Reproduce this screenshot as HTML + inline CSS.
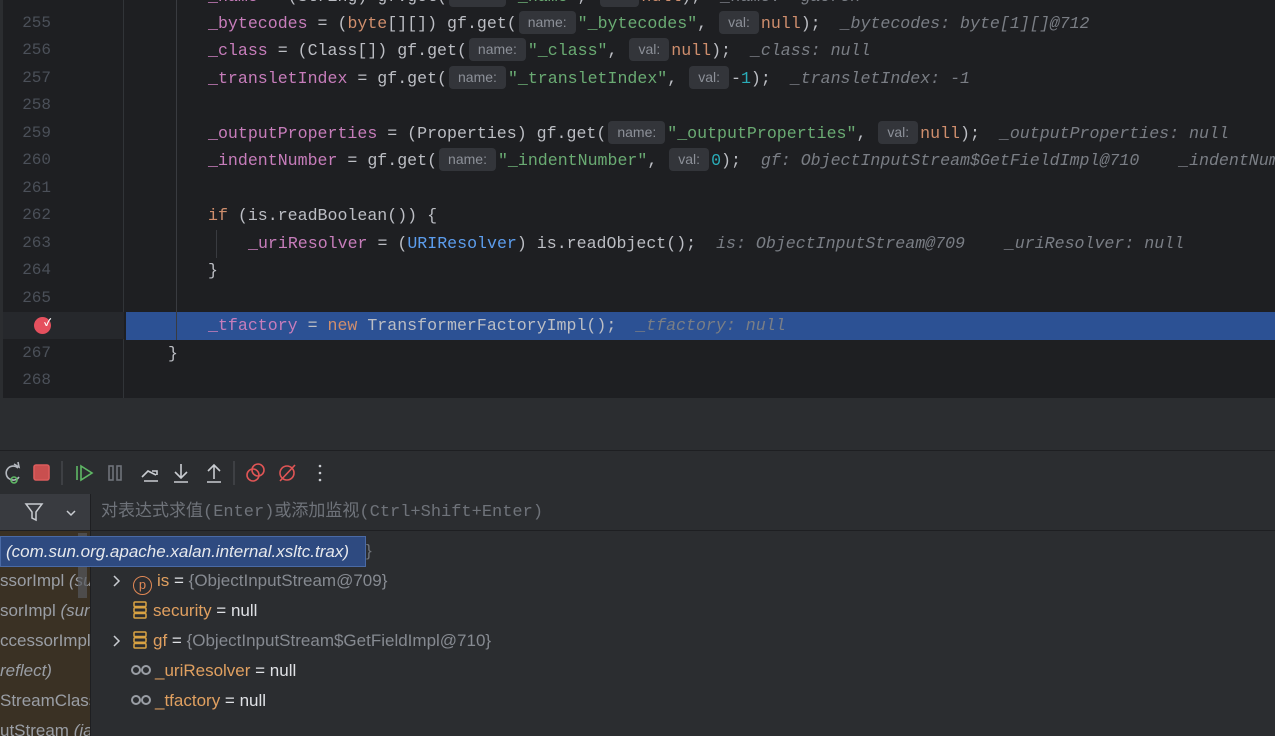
<!DOCTYPE html>
<html><head><meta charset="utf-8"><style>
*{margin:0;padding:0;box-sizing:border-box}
body{width:1275px;height:736px;overflow:hidden;background:#2b2d30;position:relative;font-family:"Liberation Sans","Noto Sans CJK SC",sans-serif}
.ed{position:absolute;left:0;top:0;width:1275px;height:398px;background:#1e1f22;overflow:hidden}
.gut{position:absolute;left:0;top:0;width:124px;height:398px;border-right:1px solid #313438;border-left:3px solid #2b2d30}
.ln{position:absolute;left:0;width:51px;text-align:right;font:16px "Liberation Mono",monospace;color:#4b5059;height:27px;line-height:27px}
.cl{position:absolute;left:208px;white-space:pre;font:16.6px "Liberation Mono",monospace;color:#bcbec4;height:27px;line-height:27px}
.f{color:#c77dbb}.k{color:#cf8e6d}.s{color:#6aab73}.n{color:#2aacb8}.c{color:#5c9ded}
.h{color:#7a7e85;font-style:italic}
.i{display:inline-block;font:14px "Liberation Sans",sans-serif;color:#8c9098;background:#33353a;border-radius:4px;padding:0 9px;height:23px;line-height:23px;margin:0 2px;vertical-align:1px;font-style:normal}
.guide{position:absolute;width:1px;background:#393b40}
.tb{position:absolute;top:450px;left:0;width:1275px;height:44px;background:#2b2d30;border-top:1px solid #1e1f22}
.var{position:absolute;left:91px;top:531px;right:0;bottom:0;background:#2b2d30}
.row{position:absolute;left:0;height:30px;line-height:30px;font-size:17px;color:#dfe1e5;white-space:nowrap}
.o{color:#e0a060}.g{color:#868a91}
.fr{position:absolute;left:0;top:531px;width:90px;bottom:0;background:#3a3124;overflow:hidden}
.fr div{position:absolute;left:0;height:30px;line-height:30px;font-size:17px;color:#9a9ea5;white-space:nowrap}
.st{display:inline-block;width:14px;height:18px;vertical-align:-3px;margin-right:6px}
</style></head><body>
<div class="ed">
<div class="gut"></div>
<div style="position:absolute;left:3px;top:312px;width:121px;height:27px;background:#26282c"></div>
<div style="position:absolute;left:126px;top:312px;width:1149px;height:28px;background:#2c5194"></div>
<div class="guide" style="left:176px;top:0;height:340px"></div>
<div class="guide" style="left:216px;top:230px;height:28px"></div>
<div class="ln" style="top:-17px">254</div>
<div class="ln" style="top:10px">255</div><div class="ln" style="top:37px">256</div><div class="ln" style="top:65px">257</div><div class="ln" style="top:92px">258</div><div class="ln" style="top:120px">259</div><div class="ln" style="top:147px">260</div><div class="ln" style="top:175px">261</div><div class="ln" style="top:202px">262</div><div class="ln" style="top:230px">263</div><div class="ln" style="top:257px">264</div><div class="ln" style="top:285px">265</div><div class="ln" style="top:340px">267</div><div class="ln" style="top:367px">268</div>
<div style="position:absolute;left:34px;top:317px;width:17px;height:17px;border-radius:50%;background:#e5505e"></div>
<div style="position:absolute;left:44px;top:314px;color:#fff;font-size:10px;font-weight:bold">✓</div>
<div class="cl" style="top:-17px"><span class="f">_name</span> = (String) gf.get(<span class="i">name:</span><span class="s">"_name"</span>, <span class="i">val:</span><span class="k">null</span>);  <span class="h">_name: "gaoren"</span></div>
<div class="cl" style="top:10px"><span class="f">_bytecodes</span> = (<span class="k">byte</span>[][]) gf.get(<span class="i">name:</span><span class="s">"_bytecodes"</span>, <span class="i">val:</span><span class="k">null</span>);  <span class="h">_bytecodes: byte[1][]@712</span></div>
<div class="cl" style="top:37px"><span class="f">_class</span> = (Class[]) gf.get(<span class="i">name:</span><span class="s">"_class"</span>, <span class="i">val:</span><span class="k">null</span>);  <span class="h">_class: null</span></div>
<div class="cl" style="top:65px"><span class="f">_transletIndex</span> = gf.get(<span class="i">name:</span><span class="s">"_transletIndex"</span>, <span class="i">val:</span>-<span class="n">1</span>);  <span class="h">_transletIndex: -1</span></div>
<div class="cl" style="top:120px"><span class="f">_outputProperties</span> = (Properties) gf.get(<span class="i">name:</span><span class="s">"_outputProperties"</span>, <span class="i">val:</span><span class="k">null</span>);  <span class="h">_outputProperties: null</span></div>
<div class="cl" style="top:147px"><span class="f">_indentNumber</span> = gf.get(<span class="i">name:</span><span class="s">"_indentNumber"</span>, <span class="i">val:</span><span class="n">0</span>);  <span class="h">gf: ObjectInputStream$GetFieldImpl@710    _indentNumber: 0</span></div>
<div class="cl" style="top:202px"><span class="k">if</span> (is.readBoolean()) {</div>
<div class="cl" style="top:230px;left:248px"><span class="f">_uriResolver</span> = (<span class="c">URIResolver</span>) is.readObject();  <span class="h">is: ObjectInputStream@709    _uriResolver: null</span></div>
<div class="cl" style="top:257px">}</div>
<div class="cl" style="top:312px"><span class="f">_tfactory</span> = <span class="k">new</span> TransformerFactoryImpl();  <span class="h">_tfactory: null</span></div>
<div class="cl" style="top:340px;left:168px">}</div>
</div>
<div style="position:absolute;top:398px;left:0;width:1275px;height:51px;background:#2b2d30"></div>
<div class="tb">
<svg width="340" height="44" style="position:absolute;left:0;top:0" fill="none" stroke-width="1.6">
<path d="M18 17a7 7 0 1 0 1 9" stroke="#b4b8bf"/><path d="M14 13l5 3-1-5" stroke="#b4b8bf"/><circle cx="14" cy="29" r="3" stroke="#5fb865"/>
<rect x="34" y="14" width="15" height="15" rx="2" fill="#c94f4f" stroke="#db5c5c"/>
<line x1="62" y1="10" x2="62" y2="34" stroke="#43454a"/>
<line x1="77" y1="15" x2="77" y2="29" stroke="#5fb865"/><path d="M81 15l11 7-11 7z" stroke="#5fb865"/>
<rect x="109" y="15" width="4" height="14" stroke="#6f737a"/><rect x="117" y="15" width="4" height="14" stroke="#6f737a"/>
<path d="M142 26l6-6 8 4M144 30h14M152 20h5v4" stroke="#c9ccd1"/>
<path d="M181 13v13M175 21l6 6 6-6M174 31h14" stroke="#c9ccd1"/>
<path d="M214 28v-13M208 20l6-6 6 6M207 31h14" stroke="#c9ccd1"/>
<line x1="234" y1="10" x2="234" y2="34" stroke="#43454a"/>
<circle cx="253" cy="24" r="6" stroke="#e05555"/><circle cx="258" cy="19" r="6" stroke="#e05555"/>
<circle cx="287" cy="22" r="7" stroke="#e05555"/><line x1="280" y1="30" x2="295" y2="14" stroke="#e05555"/>
<circle cx="320" cy="15" r="1.3" fill="#c9ccd1" stroke="none"/><circle cx="320" cy="22" r="1.3" fill="#c9ccd1" stroke="none"/><circle cx="320" cy="29" r="1.3" fill="#c9ccd1" stroke="none"/>
</svg>
</div>
<div style="position:absolute;left:0;top:494px;width:90px;height:37px;background:#393b40;border-bottom:1px solid #1e1f22"></div>
<svg width="90" height="37" style="position:absolute;left:0;top:494px" fill="none" stroke="#c9ccd1" stroke-width="1.5"><path d="M26 10h16l-6 8v8l-4-2v-6z"/><path d="M67 17l4 4 4-4"/></svg>
<div style="position:absolute;left:90px;top:494px;width:1px;height:242px;background:#1e1f22"></div>
<div style="position:absolute;left:91px;top:494px;right:0;height:37px;background:#2b2d30;border-bottom:1px solid #1e1f22;font:17px 'Liberation Mono','Noto Sans CJK SC',monospace;color:#6f737a;line-height:37px;padding-left:10px">对表达式求值(Enter)或添加监视(Ctrl+Shift+Enter)</div>
<div class="fr">
<div style="top:35px">ssorImpl <i>(sun</i></div>
<div style="top:65px">sorImpl <i>(sun</i></div>
<div style="top:95px">ccessorImpl</div>
<div style="top:125px"><i>reflect)</i></div>
<div style="top:155px">StreamClass</div>
<div style="top:185px">utStream <i>(ja</i></div>
</div>
<div style="position:absolute;left:78px;top:533px;width:9px;height:65px;background:#55585e;opacity:.7"></div>
<div class="var">
<svg width="20" height="200" style="position:absolute;left:20px;top:0" fill="none" stroke="#c9ccd1" stroke-width="1.5"><path d="M3 45l5 5-5 5M3 105l5 5-5 5"/></svg>
<div class="row" style="left:42px;top:35px"><span style="display:inline-block;width:19px;height:19px;border:1.5px solid #e08855;border-radius:50%;color:#e08855;font-size:13px;line-height:16px;text-align:center;vertical-align:-3px;margin-right:5px">p</span><span class="o">is</span> = <span class="g">{ObjectInputStream@709}</span></div>
<div class="row" style="left:42px;top:65px"><svg class="st" viewBox="0 0 14 18" fill="none" stroke="#d9a343" stroke-width="1.5"><rect x="1" y="1" width="12" height="4.5" rx="1"/><rect x="1" y="6.8" width="12" height="4.5" rx="1"/><rect x="1" y="12.5" width="12" height="4.5" rx="1"/></svg><span class="o">security</span> = null</div>
<div class="row" style="left:42px;top:95px"><svg class="st" viewBox="0 0 14 18" fill="none" stroke="#d9a343" stroke-width="1.5"><rect x="1" y="1" width="12" height="4.5" rx="1"/><rect x="1" y="6.8" width="12" height="4.5" rx="1"/><rect x="1" y="12.5" width="12" height="4.5" rx="1"/></svg><span class="o">gf</span> = <span class="g">{ObjectInputStream$GetFieldImpl@710}</span></div>
<div class="row" style="left:40px;top:125px"><svg width="20" height="12" style="vertical-align:0;margin-right:4px" fill="none" stroke="#9a9ea5" stroke-width="2"><circle cx="5" cy="6" r="4"/><circle cx="15" cy="6" r="4"/></svg><span class="o">_uriResolver</span> = null</div>
<div class="row" style="left:40px;top:155px"><svg width="20" height="12" style="vertical-align:0;margin-right:4px" fill="none" stroke="#9a9ea5" stroke-width="2"><circle cx="5" cy="6" r="4"/><circle cx="15" cy="6" r="4"/></svg><span class="o">_tfactory</span> = null</div>
<div class="row" style="left:275px;top:5px;color:#6f737a">}</div>
</div>
<div style="position:absolute;left:0;top:536px;width:366px;height:31px;background:#2e4a80;border:1px solid #4a6aa5;color:#e6e8ec;font-size:17px;font-style:italic;line-height:29px;padding-left:5px;white-space:nowrap;overflow:hidden">(com.sun.org.apache.xalan.internal.xsltc.trax)</div>
</body></html>
